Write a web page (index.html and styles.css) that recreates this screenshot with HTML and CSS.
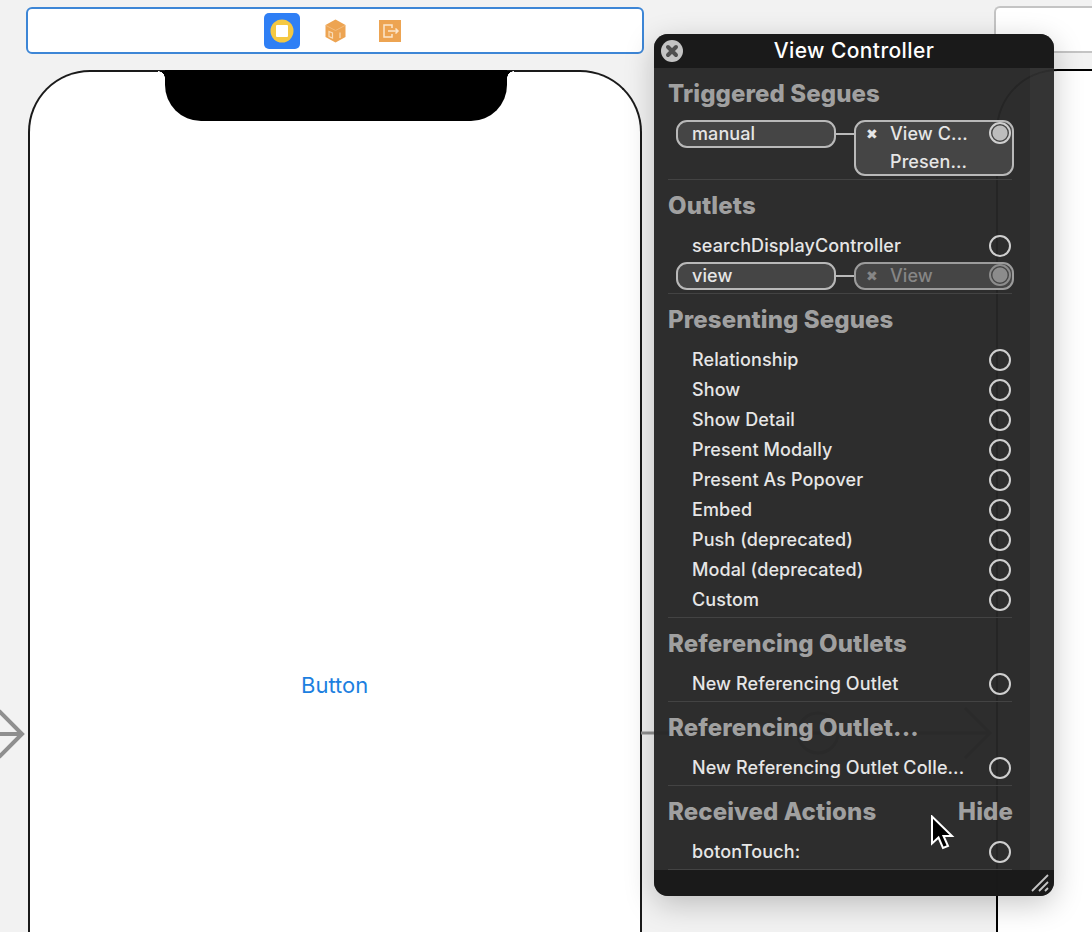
FILE: index.html
```html
<!DOCTYPE html>
<html lang="en">
<head>
    <meta charset="UTF-8">
    <meta name="viewport" content="width=device-width, initial-scale=1.0">
    <title>View Controller</title>
    <link rel="stylesheet" href="styles.css">
</head>
<body>

    <!-- storyboard canvas -->
    <div class="scene-bar">
        <span class="scene-icon selected">
            <svg width="36" height="36" viewBox="0 0 36 36"><circle cx="18" cy="18" r="11.500" fill="#f5c842"/><rect x="12" y="12" width="12" height="12" rx="1" fill="#fff"/></svg>
        </span>
        <span class="scene-icon">
            <svg width="36" height="36" viewBox="0 0 36 36"><path d="M17.500 6.500l10 5.500v12l-10 5.500-10-5.500v-12z" fill="#eda452"/><path d="M8 12.500l9.500 5 9.500-5" fill="none" stroke="#f3bd80" stroke-width="1"/><path d="M11 18.500l3.500 1.500v5l-3.500-1.500zM22 19.500v5.500" fill="none" stroke="#f9dcb8" stroke-width="1.200"/></svg>
        </span>
        <span class="scene-icon">
            <svg width="36" height="36" viewBox="0 0 36 36"><rect x="7" y="7" width="22" height="22" fill="#eda452"/><path d="M20 15v-3h-8v12h8v-3" fill="none" stroke="#fbe6cd" stroke-width="1.500"/><path d="M16 18h10M23.500 15.500l2.500 2.500-2.500 2.500" fill="none" stroke="#fbe6cd" stroke-width="1.500"/></svg>
        </span>
    </div>

    <div class="phone">
        <div class="notch"></div>
        <span class="phone-button">Button</span>
    </div>

    <svg class="entry-arrow" width="26" height="52" viewBox="0 0 26 52"><path d="M0 26h23M-1 3l23 23-23 23" fill="none" stroke="#8f8f8f" stroke-width="4"/></svg>

    <div class="scene-bar-next"></div>
    <div class="phone-next"></div>
    <svg class="segue" width="360" height="60" viewBox="0 0 360 60"><path d="M0 30h157M197 30h152M324 5l25 25-25 25" fill="none" stroke="#8f8f8f" stroke-width="3"/><circle cx="177" cy="30" r="20" fill="none" stroke="#8f8f8f" stroke-width="3"/><path d="M167 30h20" stroke="#8f8f8f" stroke-width="3"/></svg>

    <!-- connections panel -->
    <div class="panel">
        <div class="panel-title">
            <span class="close-btn">
                <svg width="22" height="22" viewBox="0 0 22 22"><circle cx="11" cy="11" r="11" fill="#c4c4c4"/><path d="M7 7l8 8M15 7l-8 8" stroke="#505050" stroke-width="4" stroke-linecap="round"/></svg>
            </span>
            View Controller
        </div>

        <div class="panel-body">
            <div class="section">
                <h3>Triggered Segues</h3>
                <div class="link-row tall">
                    <span class="pill">manual</span>
                    <span class="wire"></span>
                    <span class="target double">
                        <span class="target-line"><b class="x">&#10006;</b>View C...</span>
                        <span class="target-line">Presen...</span>
                        <i class="dot filled"></i>
                    </span>
                </div>
            </div>

            <div class="section">
                <h3>Outlets</h3>
                <div class="row">searchDisplayController<i class="dot"></i></div>
                <div class="link-row">
                    <span class="pill">view</span>
                    <span class="wire"></span>
                    <span class="target dim">
                        <span class="target-line"><b class="x">&#10006;</b>View</span>
                        <i class="dot filled"></i>
                    </span>
                </div>
            </div>

            <div class="section">
                <h3>Presenting Segues</h3>
                <div class="row">Relationship<i class="dot"></i></div>
                <div class="row">Show<i class="dot"></i></div>
                <div class="row">Show Detail<i class="dot"></i></div>
                <div class="row">Present Modally<i class="dot"></i></div>
                <div class="row">Present As Popover<i class="dot"></i></div>
                <div class="row">Embed<i class="dot"></i></div>
                <div class="row">Push (deprecated)<i class="dot"></i></div>
                <div class="row">Modal (deprecated)<i class="dot"></i></div>
                <div class="row">Custom<i class="dot"></i></div>
            </div>

            <div class="section">
                <h3>Referencing Outlets</h3>
                <div class="row">New Referencing Outlet<i class="dot"></i></div>
            </div>

            <div class="section">
                <h3>Referencing Outlet...</h3>
                <div class="row">New Referencing Outlet Colle...<i class="dot"></i></div>
            </div>

            <div class="section">
                <h3>Received Actions <span class="hide-link">Hide</span></h3>
                <div class="row">botonTouch:<i class="dot"></i></div>
            </div>
        </div>

        <div class="panel-foot">
            <svg class="grip" width="20" height="20" viewBox="0 0 20 20"><path d="M2 18L18 2M9 18l9-9M15 18l3-3" stroke="#c4c4c4" stroke-width="1.800"/></svg>
        </div>
    </div>

    <svg class="cursor" width="26" height="38" viewBox="0 0 26 38"><path d="M2 1.500v27l6.500-6 4.500 10.500 5-2-4.500-10h8.500z" fill="#000" stroke="#fff" stroke-width="2"/></svg>

</body>
</html>
```

FILE: styles.css
```css
* {
    box-sizing: border-box;
}

body {
    margin: 0;
    width: 1092px;
    height: 932px;
    position: relative;
    overflow: hidden;
    background-color: #f2f2f2;
    font-family: 'Inter', sans-serif;
}

/* storyboard canvas */
.scene-bar {
    position: absolute;
    left: 26px;
    top: 7px;
    width: 618px;
    height: 47px;
    padding-left: 2px;
    background-color: #fff;
    border: 2px solid #3d86d6;
    border-radius: 6px;
    display: flex;
    justify-content: center;
    align-items: center;
    gap: 18px;
}

.scene-icon {
    width: 36px;
    height: 36px;
    border-radius: 5px;
    display: block;
}

.scene-icon svg {
    display: block;
}

.scene-icon.selected {
    background-color: #2f7ff5;
}

.phone {
    position: absolute;
    left: 28px;
    top: 70px;
    width: 614px;
    height: 862px;
    background-color: #fff;
    border: 2px solid #1a1a1a;
    border-bottom: none;
    border-radius: 62px 62px 0 0;
}

.notch {
    position: absolute;
    left: 135px;
    top: -2px;
    width: 342px;
    height: 51px;
    background-color: #000;
    border-radius: 0 0 36px 36px;
}

.notch::before,
.notch::after {
    content: "";
    position: absolute;
    top: 1px;
    width: 7px;
    height: 7px;
}

.notch::before {
    left: -7px;
    background: radial-gradient(circle at 0 100%, #fff 6.500px, #000 7px);
}

.notch::after {
    right: -7px;
    background: radial-gradient(circle at 100% 100%, #fff 6.500px, #000 7px);
}

.phone-button {
    position: absolute;
    left: 271px;
    top: 600px;
    font-size: 22px;
    color: #1d7fe0;
}

.entry-arrow {
    position: absolute;
    left: 0;
    top: 708px;
}

.scene-bar-next {
    position: absolute;
    left: 994px;
    top: 6px;
    width: 98px;
    height: 47px;
    background-color: #fff;
    border: 2px solid #c4c4c4;
    border-right: none;
    border-radius: 6px 0 0 6px;
}

.phone-next {
    position: absolute;
    left: 996px;
    top: 69px;
    width: 96px;
    height: 863px;
    background-color: #fff;
    border: 2px solid #000;
    border-right: none;
    border-bottom: none;
    border-radius: 62px 0 0 0;
}

.segue {
    position: absolute;
    left: 641px;
    top: 703px;
}

/* connections panel */
.panel {
    position: absolute;
    left: 654px;
    top: 34px;
    width: 400px;
    height: 862px;
    display: flex;
    flex-direction: column;
    border-radius: 14px;
    overflow: hidden;
    background-color: rgba(38, 38, 38, 0.97);
    color: #e6e6e6;
    box-shadow: 0 8px 30px rgba(0, 0, 0, 0.22);
}

.panel-title {
    height: 34px;
    flex-shrink: 0;
    padding-bottom: 2px;
    position: relative;
    display: flex;
    justify-content: center;
    align-items: center;
    background-color: rgba(24, 24, 24, 0.85);
    color: #fff;
    font-size: 21px;
    font-weight: 500;
    letter-spacing: 0.4px;
}

.close-btn {
    position: absolute;
    left: 7px;
    top: 6px;
    height: 22px;
}

.panel-body {
    flex: 1;
    padding: 0 42px 0 14px;
    background: linear-gradient(to right, transparent 376px, rgba(255, 255, 255, 0.035) 376px);
}

.section {
    padding-bottom: 3px;
    border-bottom: 1px solid #434343;
}

.section h3 {
    margin: 0;
    height: 50px;
    padding-top: 11px;
    display: flex;
    justify-content: space-between;
    font-size: 24px;
    line-height: 30px;
    font-weight: 800;
    letter-spacing: 0.1px;
    color: #a0a0a0;
}

.hide-link {
    margin-right: -1px;
}

.row {
    height: 30px;
    padding-left: 24px;
    display: flex;
    align-items: center;
    justify-content: space-between;
    font-size: 18px;
    font-weight: 500;
    letter-spacing: 0.1px;
}

.dot {
    width: 22px;
    height: 22px;
    margin: 2px 1px 0 0;
    border: 2px solid #cfcfcf;
    border-radius: 50%;
    display: block;
}

.dot.filled {
    position: absolute;
    right: 1px;
    top: 0;
    margin: 0;
    background: radial-gradient(circle, #bdbdbd 0 7px, transparent 8px);
}

.link-row {
    height: 30px;
    margin-right: -2px;
    padding: 2px 0 0 8px;
    display: flex;
    align-items: flex-start;
    font-size: 18px;
    font-weight: 500;
    letter-spacing: 0.1px;
}

.link-row.tall {
    height: 58px;
}

.pill {
    width: 160px;
    height: 28px;
    padding-left: 14px;
    line-height: 24px;
    background-color: #454545;
    border: 2px solid #b9b9b9;
    border-radius: 11px;
}

.wire {
    width: 18px;
    height: 2px;
    margin-top: 13px;
    background-color: #b9b9b9;
}

.target {
    width: 160px;
    height: 28px;
    position: relative;
    background-color: #454545;
    border: 2px solid #b9b9b9;
    border-radius: 11px;
}

.target.double {
    height: 56px;
}

.target.dim {
    color: #868686;
    border-color: #9c9c9c;
}

.target.dim .dot {
    border-color: #8c8c8c;
    background: radial-gradient(circle, #8c8c8c 0 7px, transparent 8px);
}

.target-line {
    display: block;
    height: 28px;
    padding-left: 34px;
    line-height: 24px;
    position: relative;
}

.x {
    position: absolute;
    left: 10px;
    top: 0;
    font-size: 14px;
    font-family: 'DejaVu Sans', sans-serif;
    font-weight: 400;
}

.panel-foot {
    height: 26px;
    flex-shrink: 0;
    position: relative;
    background-color: rgba(24, 24, 24, 0.85);
}

.grip {
    position: absolute;
    right: 4px;
    bottom: 3px;
}

.cursor {
    position: absolute;
    left: 930px;
    top: 815px;
}
```
